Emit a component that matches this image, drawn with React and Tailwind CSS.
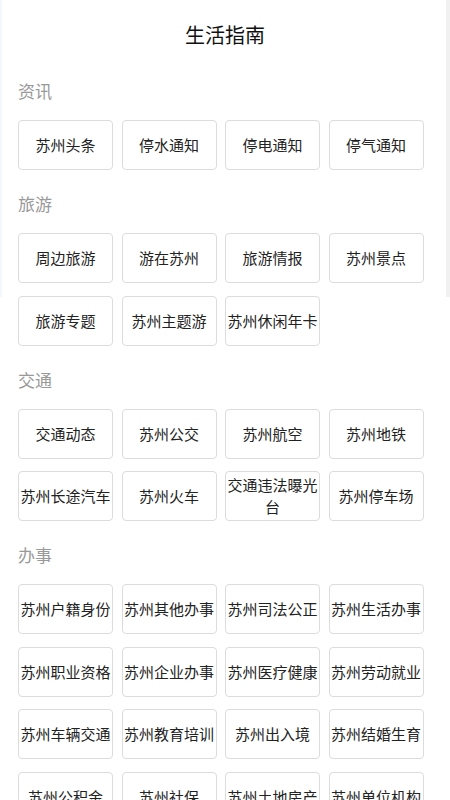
import React from 'react';

const sections = [
  { title: '资讯', items: ['苏州头条', '停水通知', '停电通知', '停气通知'] },
  { title: '旅游', items: ['周边旅游', '游在苏州', '旅游情报', '苏州景点', '旅游专题', '苏州主题游', '苏州休闲年卡'] },
  { title: '交通', items: ['交通动态', '苏州公交', '苏州航空', '苏州地铁', '苏州长途汽车', '苏州火车', '交通违法曝光台', '苏州停车场'] },
  {
    title: '办事',
    items: [
      '苏州户籍身份', '苏州其他办事', '苏州司法公正', '苏州生活办事',
      '苏州职业资格', '苏州企业办事', '苏州医疗健康', '苏州劳动就业',
      '苏州车辆交通', '苏州教育培训', '苏州出入境', '苏州结婚生育',
      '苏州公积金', '苏州社保', '苏州土地房产', '苏州单位机构',
    ],
  },
];

export default function App() {
  return (
    <div className="relative h-[800px] overflow-hidden bg-white font-['Noto_Sans_CJK_SC','Noto_Sans',sans-serif]">
      {/* faint scroll artefacts at the edges */}
      <div className="absolute left-0 top-0 w-[2px] h-[297px] bg-[#f4f7fb]" />
      <div className="absolute right-0 top-0 w-[4px] h-[297px] bg-[#f1f1f1]" />

      <div className="h-[70px] flex items-center justify-center text-[20px] text-[#111]">生活指南</div>

      {sections.map((s, i) => (
        <div key={s.title} className={i === 0 ? 'mt-[9px]' : 'mt-[22px]'}>
          <div className="pl-[18px] h-[24px] leading-[24px] text-[17px] text-[#999]">{s.title}</div>
          <div className="mt-[17px] ml-[18px] w-[406px] grid grid-cols-[repeat(4,95px)] gap-x-[8.5px] gap-y-[12.5px] auto-rows-[50px]">
            {s.items.map(item => (
              <div
                key={item}
                className="h-[50px] flex items-center justify-center text-center rounded-[4px] border border-[#dcdcdc] text-[15px] leading-[22px] text-[#222]"
              >
                {item}
              </div>
            ))}
          </div>
        </div>
      ))}
    </div>
  );
}
